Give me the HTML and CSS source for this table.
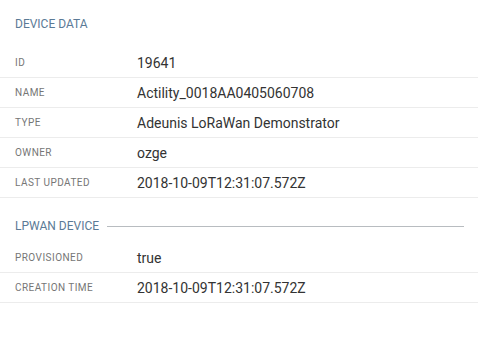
FILE: index.html
```html
<!DOCTYPE html>
<html lang="en">
<head>
  <meta charset="UTF-8">
  <meta name="viewport" content="width=device-width, initial-scale=1.0">
  <title>Device Data</title>
  <link rel="stylesheet" href="styles.css">
</head>
<body>
  <div class="details">
    <h3 class="section-title">Device Data</h3>
    <table class="props">
      <tr><td class="key">ID</td><td class="val">19641</td></tr>
      <tr><td class="key">Name</td><td class="val">Actility_0018AA0405060708</td></tr>
      <tr><td class="key">Type</td><td class="val">Adeunis LoRaWan Demonstrator</td></tr>
      <tr><td class="key">Owner</td><td class="val">ozge</td></tr>
      <tr><td class="key">Last updated</td><td class="val">2018-10-09T12:31:07.572Z</td></tr>
    </table>

    <h3 class="section-title ruled">LPWAN Device</h3>
    <table class="props">
      <tr><td class="key">Provisioned</td><td class="val">true</td></tr>
      <tr><td class="key">Creation time</td><td class="val">2018-10-09T12:31:07.572Z</td></tr>
    </table>
  </div>
</body>
</html>
```

FILE: styles.css
```css
body {
  font-family: Roboto, "Noto Sans", sans-serif;
  margin: 0;
  padding: 0;
  background-color: #fff;
}
.details {
  padding-top: 16px;
}
.section-title {
  margin: 0 0 16px 0;
  padding: 0 15px;
  font-size: 12px;
  font-weight: 400;
  line-height: 16px;
  text-transform: uppercase;
  color: #5b7a96;
}
.section-title.ruled {
  display: flex;
  align-items: center;
  gap: 8px;
  margin-top: 20px;
  margin-bottom: 9px;
  padding-right: 14px;
}
.section-title.ruled::after {
  content: "";
  flex: 1;
  height: 1px;
  background-color: #b8bcc0;
}
.props {
  width: 100%;
  border-collapse: collapse;
}
.props tr {
  border-bottom: 1px solid #ececec;
}
.props td {
  height: 29px;
  padding: 0;
  vertical-align: middle;
}
.key {
  width: 122px;
  padding-left: 15px !important;
  font-size: 10px;
  letter-spacing: 0.45px;
  text-transform: uppercase;
  color: #767676;
}
.val {
  font-size: 14px;
  color: #333;
}
```
